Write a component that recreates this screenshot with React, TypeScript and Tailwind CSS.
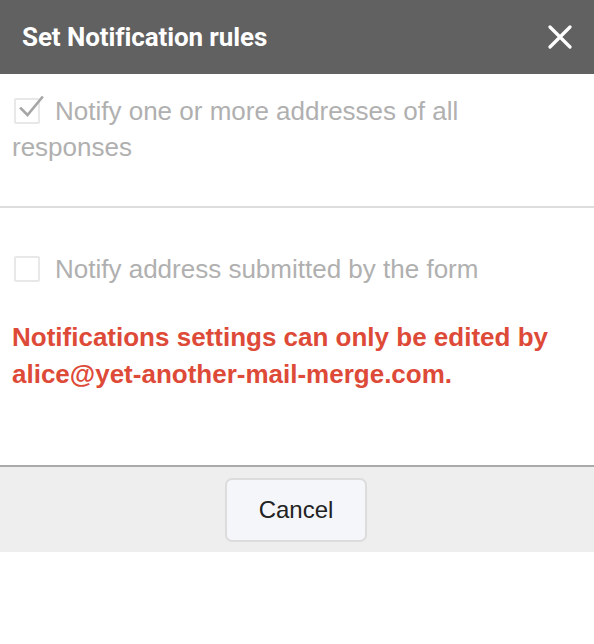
import React from "react";

const CheckBox = ({ checked }: { checked?: boolean }) => (
  <span className="relative inline-block align-[-4px] ml-[2px] mr-[15px] w-[26px] h-[26px] border-2 border-[#e8e8e8] rounded-[2px] bg-white">
    {checked && (
      <svg className="absolute left-[2px] top-[-6px] w-[26px] h-[26px]" viewBox="0 0 26 26" fill="none">
        <path d="M3 14.5 L9.5 21 L24 3.5" stroke="#a6a6a6" strokeWidth="2.6" strokeLinecap="square" />
      </svg>
    )}
  </span>
);

export default function App() {
  return (
    <div className="w-[594px] h-[644px] bg-white font-['Liberation_Sans',Arial,sans-serif]">
      {/* Header */}
      <div className="h-[74px] bg-[#616161] pl-[22px] pr-[22px] flex items-center justify-between">
        <h1 className="text-white text-[26px] font-bold font-['Roboto',sans-serif] tracking-[-0.1px]">
          Set Notification rules
        </h1>
        <svg className="w-[24px] h-[24px]" viewBox="0 0 24 24" fill="none">
          <path d="M2 2 L22 22 M22 2 L2 22" stroke="#ffffff" strokeWidth="3.2" strokeLinecap="round" />
        </svg>
      </div>

      {/* Notify all */}
      <div className="pt-[19px] pb-[41px] pl-3 pr-4 text-[26px] leading-[36px] text-[#b0b0b0]">
        <CheckBox checked />
        Notify one or more addresses of all responses
      </div>

      <div className="h-[2px] bg-[#dddddd]" />

      {/* Notify submitter */}
      <div className="pt-[43px] pb-[72px] px-3">
        <div className="text-[26px] leading-[36px] text-[#b0b0b0]">
          <CheckBox />
          Notify address submitted by the form
        </div>
        <p className="mt-[32px] text-[26px] leading-[37px] font-bold text-[#de4a38]">
          Notifications settings can only be edited by alice@yet-another-mail-merge.com.
        </p>
      </div>

      {/* Footer */}
      <div className="border-t-2 border-[#aaaaaa] bg-[#eeeeee] pt-[11px] pb-[10px] flex justify-center">
        <button className="w-[142px] h-[64px] rounded-[7px] border-2 border-[#dcdcdc] bg-[#f5f6fa] text-[24px] text-[#222222] mr-[2px]">
          Cancel
        </button>
      </div>
    </div>
  );
}
